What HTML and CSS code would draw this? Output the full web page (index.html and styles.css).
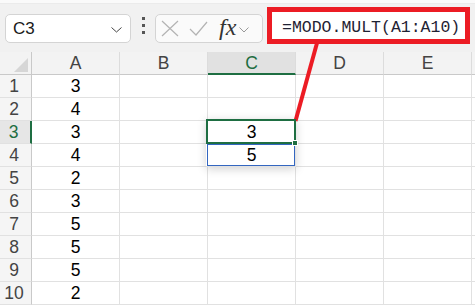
FILE: index.html
```html
<!DOCTYPE html>
<html>
<head>
<meta charset="utf-8">
<link rel="stylesheet" href="styles.css">
</head>
<body>
<div class="app">
  <div class="topstrip"></div>
  <div class="toolbar">
    <div class="namebox">
      <span class="name">C3</span>
      <svg class="chev" width="11" height="6" viewBox="0 0 11 6"><path d="M0.5 0.5 L5.5 5 L10.5 0.5" fill="none" stroke="#444" stroke-width="1"/></svg>
    </div>
    <div class="dots"><i></i><i></i><i></i></div>
    <div class="fxgroup">
      <svg class="ico" width="18" height="17" viewBox="0 0 18 17"><path d="M1 1 L17 16 M17 1 L1 16" stroke="#b3b3b3" stroke-width="1.2" fill="none"/></svg>
      <svg class="ico" width="19" height="15" viewBox="0 0 19 15"><path d="M1 8 L7 14 L18 1" stroke="#b3b3b3" stroke-width="1.2" fill="none"/></svg>
      <span class="fx">fx</span>
      <svg class="chev2" width="10" height="6" viewBox="0 0 10 6"><path d="M0.5 0.5 L5 5 L9.5 0.5" fill="none" stroke="#999" stroke-width="1"/></svg>
    </div>
    <div class="formula">=MODO.MULT(A1:A10)</div>
  </div>
  <div class="sheet">
    <div class="corner"><span class="tri"></span></div>
    <div class="ch">A</div><div class="ch">B</div><div class="ch sel">C</div><div class="ch">D</div><div class="ch">E</div><div class="ch end"></div>

    <div class="rh">1</div><div class="c">3</div><div class="c"></div><div class="c"></div><div class="c"></div><div class="c"></div><div class="c end"></div>
    <div class="rh">2</div><div class="c">4</div><div class="c"></div><div class="c"></div><div class="c"></div><div class="c"></div><div class="c end"></div>
    <div class="rh sel">3</div><div class="c">3</div><div class="c"></div><div class="c active">3<span class="shadow"></span><span class="ring"></span><span class="handle"></span></div><div class="c"></div><div class="c"></div><div class="c end"></div>
    <div class="rh">4</div><div class="c">4</div><div class="c"></div><div class="c spill">5<span class="blue"></span></div><div class="c"></div><div class="c"></div><div class="c end"></div>
    <div class="rh">5</div><div class="c">2</div><div class="c"></div><div class="c"></div><div class="c"></div><div class="c"></div><div class="c end"></div>
    <div class="rh">6</div><div class="c">3</div><div class="c"></div><div class="c"></div><div class="c"></div><div class="c"></div><div class="c end"></div>
    <div class="rh">7</div><div class="c">5</div><div class="c"></div><div class="c"></div><div class="c"></div><div class="c"></div><div class="c end"></div>
    <div class="rh">8</div><div class="c">5</div><div class="c"></div><div class="c"></div><div class="c"></div><div class="c"></div><div class="c end"></div>
    <div class="rh">9</div><div class="c">5</div><div class="c"></div><div class="c"></div><div class="c"></div><div class="c"></div><div class="c end"></div>
    <div class="rh">10</div><div class="c">2</div><div class="c"></div><div class="c"></div><div class="c"></div><div class="c"></div><div class="c end"></div>
  </div>
  <svg class="pointer" width="475" height="306" viewBox="0 0 475 306"><line x1="317" y1="43" x2="295.5" y2="121" stroke="#ec1c24" stroke-width="4"/></svg>
</div>
</body>
</html>
```
FILE: styles.css
```css
html, body { margin: 0; padding: 0; background: #fff; }
body { width: 475px; height: 306px; overflow: hidden; font-family: "Liberation Sans", Arial, sans-serif; }
.app { position: relative; width: 475px; height: 306px; overflow: hidden; }
.topstrip { height: 4px; background: #fafafa; border-bottom: 1px solid #ebebeb; box-sizing: border-box; }
.toolbar { height: 48px; background: #f1f1f1; display: flex; align-items: flex-start; box-sizing: border-box; }
.namebox { margin: 10px 0 0 5px; width: 126px; height: 29px; box-sizing: border-box; background: #fff; border: 1px solid #d4d4d4; border-radius: 5px; display: flex; align-items: center; justify-content: space-between; padding: 0 8px 0 7px; }
.name { font-size: 17px; color: #1a1a1a; }
.chev { margin-top: 2px; }
.dots { margin: 13px 0 0 11px; width: 3px; display: flex; flex-direction: column; gap: 4px; }
.dots i { display: block; width: 3px; height: 3px; background: #555; }
.fxgroup { margin: 10px 0 0 10px; width: 108px; height: 29px; box-sizing: border-box; background: #fafafa; border: 1px solid #d4d4d4; border-radius: 5px; display: flex; align-items: center; padding-left: 5px; }
.fxgroup .ico { margin-right: 10px; }
.fx { font-family: "Liberation Serif", "DejaVu Serif", serif; font-style: italic; font-size: 24px; color: #333; margin-left: 1px; margin-top: -2px; letter-spacing: 0; }
.chev2 { margin-left: 3px; margin-top: 2px; }
.formula { margin: 3px 0 0 4px; width: 203px; height: 37px; box-sizing: border-box; border: 5px solid #ec1c24; background: #fff; font-family: "Liberation Mono", "DejaVu Sans Mono", monospace; font-size: 16.5px; color: #1f2233; padding: 6px 0 0 10px; line-height: 20px; white-space: nowrap; }
.sheet { display: grid; grid-template-columns: 32px repeat(5, 88px) 1fr; grid-template-rows: repeat(11, 23px); }
.sheet > div { box-sizing: border-box; display: flex; align-items: center; justify-content: center; font-size: 17.5px; }
.corner { background: #f3f3f3; border-right: 1px solid #c9c9c9; border-bottom: 1px solid #c9c9c9; position: relative; }
.tri { position: absolute; right: 3px; bottom: 2px; width: 0; height: 0; border-left: 14px solid transparent; border-bottom: 14px solid #d6d6d6; }
.ch { background: #f3f3f3; border-right: 1px solid #dcdcdc; border-bottom: 1px solid #c9c9c9; color: #444; padding-top: 1px; }
.ch.sel { background: #e1e1e1; color: #1e6e42; border-bottom: 2px solid #1e6e42; }
.rh { background: #f5f5f5; border-right: 1px solid #c9c9c9; border-bottom: 1px solid #e1e1e1; color: #444; padding-right: 3px; }
.rh.sel { background: #e6e6e6; color: #1e6e42; border-right: 2px solid #1e6e42; }
.c { background: #fff; border-right: 1px solid #e1e1e1; border-bottom: 1px solid #e1e1e1; color: #000; }
.ch.end, .c.end { border-right: none; }
.active, .spill { position: relative; }
.active { z-index: 2; }
.spill { z-index: 1; }
.shadow { position: absolute; left: -2px; top: -2px; right: -1px; height: 48px; box-shadow: 0 2px 9px rgba(0,0,0,0.18); z-index: -1; }
.ring { position: absolute; left: -2px; top: -2px; right: -1px; bottom: -1px; border: 2px solid #1e6e42; }
.handle { position: absolute; right: -3px; bottom: -3px; width: 6px; height: 6px; box-sizing: border-box; background: #1e6e42; border: 1px solid #fff; }
.blue { position: absolute; left: -1px; top: 0; right: 0; bottom: 0; border: 1px solid #3366c0; }
.pointer { position: absolute; left: 0; top: 0; pointer-events: none; }
```
